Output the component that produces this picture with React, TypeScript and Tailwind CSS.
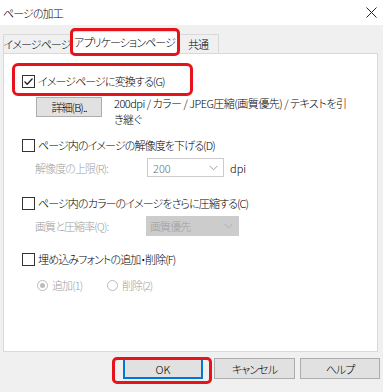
import React from "react";

function Check({ checked = false }: { checked?: boolean }) {
  return (
    <span className="w-[13px] h-[13px] border border-[#333333] bg-white flex items-center justify-center shrink-0">
      {checked && (
        <svg width="11" height="11" viewBox="0 0 11 11">
          <path d="M1.5 5.5 L4.2 8.2 L9.5 2.5" fill="none" stroke="#222" strokeWidth="1.3" />
        </svg>
      )}
    </span>
  );
}

function Radio({ on = false }: { on?: boolean }) {
  return (
    <span className="w-[11px] h-[11px] rounded-full border border-[#bcbcbc] bg-white flex items-center justify-center shrink-0">
      {on && <span className="w-[5px] h-[5px] rounded-full bg-[#bcbcbc]" />}
    </span>
  );
}

function Chevron({ color }: { color: string }) {
  return (
    <svg width="9" height="6" viewBox="0 0 9 6">
      <path d="M0.5 0.8 L4.5 4.8 L8.5 0.8" fill="none" stroke={color} strokeWidth="1" />
    </svg>
  );
}

export default function App() {
  return (
    <div className="relative w-[383px] h-[392px] bg-[#f0f0f0] overflow-hidden text-[11px] leading-[16px] tracking-[-0.9px] font-light text-black font-['Noto_Sans_CJK_JP',sans-serif] [font-feature-settings:'palt']">
      {/* title bar */}
      <div className="h-[25px] bg-white flex items-center justify-between pl-[3px] pr-[6px]">
        <span>ページの加工</span>
        <svg width="11" height="11" viewBox="0 0 11 11">
          <path d="M0.5 0.5 L10.5 10.5 M10.5 0.5 L0.5 10.5" stroke="#222" strokeWidth="1" />
        </svg>
      </div>

      {/* tabs */}
      <div className="h-[28px] flex items-end pl-[3px] whitespace-nowrap">
        <div className="w-[68px] h-[19px] border border-[#d9d9d9] border-b-0 bg-[#f0f0f0] flex items-center justify-center">
          イメージページ
        </div>
        <div className="relative z-10 w-[107px] h-[23px] -mb-px border border-[#d9d9d9] border-b-0 bg-white flex items-center justify-center pb-[2px]">
          アプリケーションページ
        </div>
        <div className="w-[41px] h-[19px] border border-[#d9d9d9] border-b-0 border-l-0 bg-[#f0f0f0] flex items-center justify-center">
          共通
        </div>
      </div>

      {/* panel */}
      <div className="ml-[3px] w-[375px] h-[299px] bg-white border border-[#d9d9d9] flex flex-col pl-[18px]">
        <label className="mt-[19px] h-[16px] flex items-center gap-[3px]">
          <Check checked />
          <span>イメージページに変換する(G)</span>
        </label>

        <div className="mt-[8px] flex items-start pl-[14px]">
          <button className="w-[66px] h-[20px] bg-[#e1e1e1] border border-[#adadad] flex items-center justify-center shrink-0">
            詳細(B)..
          </button>
          <p className="ml-[12px] -mt-[2px] tracking-[-0.5px]">
            200dpi / カラー / JPEG圧縮(画質優先) / テキストを引
            <br />
            き継ぐ
          </p>
        </div>

        <label className="mt-[10px] h-[16px] flex items-center gap-[3px]">
          <Check />
          <span>ページ内のイメージの解像度を下げる(D)</span>
        </label>

        <div className="mt-[5px] h-[19px] flex items-center pl-[13px]">
          <span className="w-[112px] text-[#a0a0a0]">解像度の上限(R):</span>
          <div className="w-[77px] h-[19px] border border-[#cccccc] bg-white flex items-center justify-between pl-[5px] pr-[5px]">
            <span className="text-[#6d6d6d] tracking-normal">200</span>
            <Chevron color="#a0a0a0" />
          </div>
          <span className="ml-[6px] tracking-normal">dpi</span>
        </div>

        <label className="mt-[18px] h-[16px] flex items-center gap-[3px]">
          <Check />
          <span>ページ内のカラーのイメージをさらに圧縮する(C)</span>
        </label>

        <div className="mt-[5px] h-[20px] flex items-center pl-[13px]">
          <span className="w-[111px] text-[#a0a0a0]">画質と圧縮率(Q):</span>
          <div className="w-[93px] h-[20px] bg-[#cccccc] flex items-center justify-between pl-[4px] pr-[6px]">
            <span className="text-[#a0a0a0]">画質優先</span>
            <Chevron color="#b0b0b0" />
          </div>
        </div>

        <label className="mt-[15px] h-[16px] flex items-center gap-[3px]">
          <Check />
          <span>埋め込みフォントの追加・削除(F)</span>
        </label>

        <div className="mt-[10px] h-[16px] flex items-center pl-[15px] text-[#a0a0a0]">
          <span className="flex items-center gap-[4px] w-[70px]">
            <Radio on />
            <span>追加(1)</span>
          </span>
          <span className="flex items-center gap-[4px]">
            <Radio />
            <span>削除(2)</span>
          </span>
        </div>
      </div>

      {/* dialog buttons */}
      <div className="mt-[6px] flex items-center">
        <button className="ml-[123px] w-[80px] h-[21px] bg-[#e1e1e1] border-2 border-[#0078d7] flex items-center justify-center tracking-normal">
          OK
        </button>
        <button className="ml-[11px] w-[81px] h-[21px] bg-[#e1e1e1] border border-[#adadad] flex items-center justify-center">
          キャンセル
        </button>
        <button className="ml-[5px] w-[80px] h-[21px] bg-[#e1e1e1] border border-[#adadad] flex items-center justify-center">
          ヘルプ
        </button>
      </div>

      {/* red highlight overlays */}
      <div className="absolute left-[70px] top-[28px] w-[110px] h-[28px] border-[3px] border-[#e5141b] rounded-[5px] z-20" />
      <div className="absolute left-[12px] top-[63px] w-[181px] h-[33px] border-[3px] border-[#e5141b] rounded-[6px] z-20" />
      <div className="absolute left-[112px] top-[357px] w-[100px] h-[27px] border-[3px] border-[#e5141b] rounded-[5px] z-20" />
    </div>
  );
}
